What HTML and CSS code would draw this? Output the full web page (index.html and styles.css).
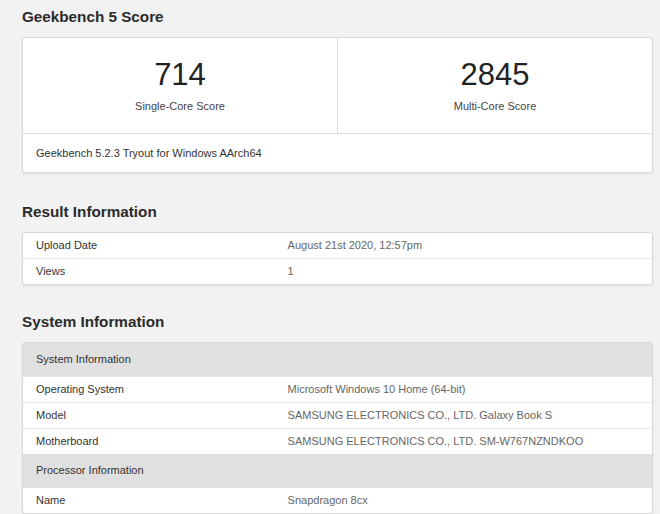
FILE: index.html
```html
<!DOCTYPE html>
<html dir="ltr" lang="en">
<head>
  <meta charset="UTF-8">
  <title>Geekbench 5 Result</title>
  <link rel="stylesheet" href="styles.css">
</head>
<body>
  <div class="page">
    <h2>Geekbench 5 Score</h2>

    <div class="card">
      <div class="scores">
        <div class="score">
          <div class="score-value">714</div>
          <div class="score-name">Single-Core Score</div>
        </div>
        <div class="score">
          <div class="score-value">2845</div>
          <div class="score-name">Multi-Core Score</div>
        </div>
      </div>
      <div class="card-footer">Geekbench 5.2.3 Tryout for Windows AArch64</div>
    </div>

    <h2>Result Information</h2>

    <table class="card info">
      <tr><td class="name">Upload Date</td><td class="value">August 21st 2020, 12:57pm</td></tr>
      <tr><td class="name">Views</td><td class="value">1</td></tr>
    </table>

    <h2>System Information</h2>

    <table class="card info">
      <tr class="head"><th colspan="2">System Information</th></tr>
      <tr><td class="name">Operating System</td><td class="value">Microsoft Windows 10 Home (64-bit)</td></tr>
      <tr><td class="name">Model</td><td class="value">SAMSUNG ELECTRONICS CO., LTD. Galaxy Book S</td></tr>
      <tr><td class="name">Motherboard</td><td class="value">SAMSUNG ELECTRONICS CO., LTD. SM-W767NZNDKOO</td></tr>
      <tr class="head"><th colspan="2">Processor Information</th></tr>
      <tr><td class="name">Name</td><td class="value">Snapdragon 8cx</td></tr>
    </table>
  </div>
</body>
</html>
```

FILE: styles.css
```css
body {margin: 0; background: #f2f2f2; color: #333; font: 11px/15px "Liberation Sans", Arial, sans-serif;}
.page {width: 631px; margin-left: 22px; padding-top: 7px;}
h2 {margin: 0 0 10px; font-size: 15.25px; line-height: 20px; font-weight: bold; color: #2b2b2b;}
h2 + .card {margin-bottom: 29px;}
h2 + .info {margin-bottom: 27px;}
.card {background: #fff; border: 1px solid #d8d8d8; border-radius: 3px; box-shadow: 0 1px 2px rgba(0, 0, 0, .08);}

.scores {display: flex;}
.score {flex: 1; padding: 21px 0 20px; text-align: center;}
.score + .score {border-left: 1px solid #dcdcdc;}
.score-value {font-size: 31px; line-height: 31px; color: #222;}
.score-name {margin-top: 9px; line-height: 14px; color: #444;}
.card-footer {padding: 12px 13px; line-height: 14px; border-top: 1px solid #dcdcdc; color: #333;}

table.info {width: 100%; border-collapse: separate; border-spacing: 0; overflow: hidden;}
.info td, .info th {padding: 5px 13px; text-align: left; font-weight: normal; border-top: 1px solid #e6e6e6;}
.info tr:first-child td, .info tr:first-child th {border-top: 0;}
.info .name {width: 40%; color: #333;}
.info .value {color: #666;}
.info .head th {padding: 9px 13px; background: #e0e0e0; color: #333; border-top: 0;}
```
